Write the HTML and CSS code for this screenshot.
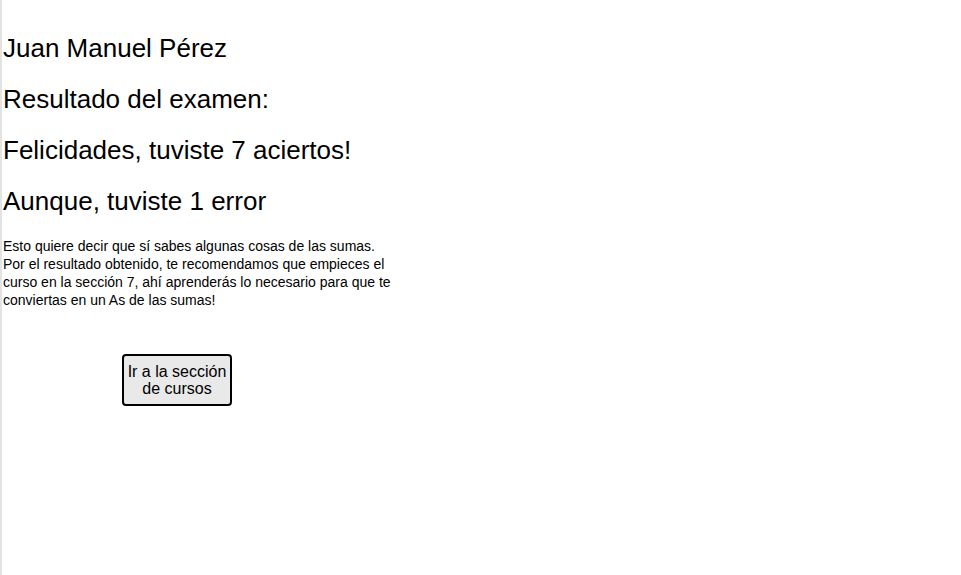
FILE: index.html
```html
<!DOCTYPE html>
<html lang="es">
<head>
<meta charset="utf-8">
<title>Resultado</title>
<link rel="stylesheet" href="styles.css">
</head>
<body>
<main class="page">
  <p class="title">Juan Manuel Pérez</p>
  <p class="title">Resultado del examen:</p>
  <p class="title">Felicidades, tuviste 7 aciertos!</p>
  <p class="title">Aunque, tuviste 1 error</p>
  <p class="text">Esto quiere decir que sí sabes algunas cosas de las sumas. Por el resultado obtenido, te recomendamos que empieces el curso en la sección 7, ahí aprenderás lo necesario para que te conviertas en un As de las sumas!</p>
  <div class="actions">
    <button class="btn">Ir a la sección<br>de cursos</button>
  </div>
</main>
</body>
</html>
```
FILE: styles.css
```css
html, body {
  margin: 0;
  height: 100%;
  background: #fff;
}
body {
  font-family: "Liberation Sans", Arial, sans-serif;
  color: #000;
}
.page {
  min-height: 100%;
  box-sizing: border-box;
  border-left: 2px solid #e3e3e3;
  padding: 1px 0 0 1px;
}
.title {
  font-size: 26px;
  margin: 21px 0;
  line-height: 30px;
}
.title:first-child {
  margin-top: 32px;
}
.text {
  font-size: 14px;
  line-height: 18px;
  width: 395px;
  margin: 21px 0 0;
}
.actions {
  margin-top: 45px;
  padding-left: 119px;
}
.btn {
  font-family: "Liberation Sans", Arial, sans-serif;
  font-size: 16px;
  line-height: 17px;
  width: 110px;
  height: 52px;
  background: #e9e9e9;
  border: 2px solid #000;
  border-radius: 4px;
  color: #000;
  padding: 0;
}
```
